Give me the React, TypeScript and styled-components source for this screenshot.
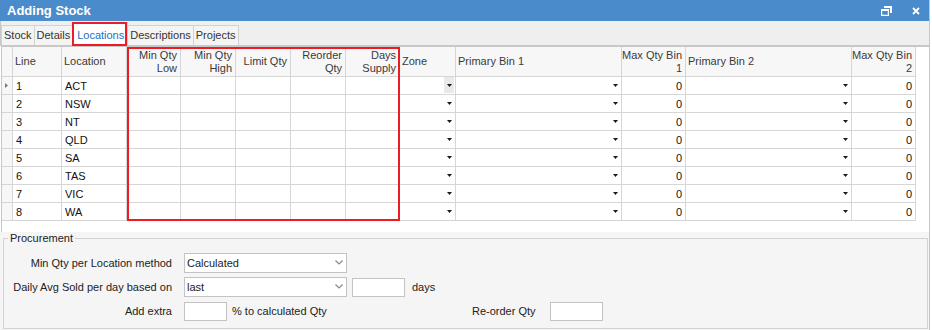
import React from 'react'
import styled, { createGlobalStyle } from 'styled-components'

const GlobalStyle = createGlobalStyle`
  html, body {
    margin: 0;
    padding: 0;
    background: #fff;
  }
  body {
    font-family: 'Liberation Sans', Arial, sans-serif;
    font-size: 11px;
    color: #1e1e1e;
  }
  * {
    box-sizing: border-box;
  }
`

const COLS = [11, 49, 65, 54, 55, 55, 55, 54, 56, 166, 64, 166, 64]
const LINE = '#d6d6d6'
const RED = '#ed1c24'

const Window = styled.div`
  position: relative;
  width: 930px;
  height: 330px;
  display: flex;
  flex-direction: column;
  border-right: 1px solid #c6c6c6;
  background: #fff;
  overflow: hidden;
`

const TitleBar = styled.div`
  flex: none;
  height: 21px;
  display: flex;
  align-items: center;
  padding: 0 9px 0 7px;
  background: #4a8ccb;
  color: #fff;
  font-size: 13px;
  font-weight: 700;
`

const Title = styled.div`
  flex: 1;
`

const TitleButtons = styled.div`
  display: flex;
  align-items: center;
  gap: 20px;
`

const TabStrip = styled.div`
  flex: none;
  height: 25px;
  display: flex;
  align-items: flex-end;
  background: #efefef;
  border-left: 1px solid #c8c8c8;
  border-bottom: 1px solid #c8c8c8;
`

const Tab = styled.div<{ $active?: boolean }>`
  height: ${({ $active }) => ($active ? '23px' : '20px')};
  padding: ${({ $active }) => ($active ? '3px 3px 0 4px' : '0 2px')};
  line-height: 19px;
  white-space: nowrap;
  border: 1px solid #d2d2d2;
  border-left: none;
  border-bottom: none;
  background: ${({ $active }) => ($active ? '#fff' : '#f4f4f4')};
  color: ${({ $active }) => ($active ? '#1d6fc4' : '#333')};
  &:first-child {
    border-left: 1px solid #d2d2d2;
  }
`

const GridArea = styled.div`
  flex: none;
  height: 186px;
  margin-left: 1px;
  border-left: 1px solid #c8c8c8;
  border-top: 1px solid #c8c8c8;
  background: #fff;
`

const Grid = styled.div`
  display: grid;
  grid-template-columns: ${COLS.map((c) => `${c}px`).join(' ')};
  width: ${COLS.reduce((a, b) => a + b, 0)}px;
`

const HeadCell = styled.div<{ $right?: boolean }>`
  height: 30px;
  display: flex;
  align-items: center;
  justify-content: ${({ $right }) => ($right ? 'flex-end' : 'flex-start')};
  text-align: ${({ $right }) => ($right ? 'right' : 'left')};
  padding: ${({ $right }) => ($right ? '0 3px 0 0' : '0 2px')};
  white-space: nowrap;
  line-height: 13px;
  background: #f7f7f7;
  color: #3a3a3a;
  border-right: 1px solid ${LINE};
  border-bottom: 1px solid ${LINE};
`

const Cell = styled.div<{ $right?: boolean; $indicator?: boolean }>`
  position: relative;
  height: 18px;
  display: flex;
  align-items: center;
  justify-content: ${({ $right }) => ($right ? 'flex-end' : 'flex-start')};
  padding: 0 3px;
  background: ${({ $indicator }) => ($indicator ? '#f7f7f7' : '#fff')};
  color: #111;
  border-right: 1px solid ${LINE};
  border-bottom: 1px solid ${LINE};
`

const DropButton = styled.span<{ $focused?: boolean }>`
  position: absolute;
  right: 1px;
  top: 0;
  bottom: 1px;
  width: 10px;
  display: flex;
  align-items: center;
  justify-content: center;
  background: ${({ $focused }) => ($focused ? '#e9e9e9' : 'transparent')};
`

const Procurement = styled.div`
  flex: 1;
  display: flex;
  padding: 0 1px 1px 3px;
  background: #f5f5f5;
`

const GroupBox = styled.fieldset`
  flex: 1;
  min-width: 0;
  margin: 0;
  padding: 8px 0 0;
  border: 1px solid #d2d2d2;
  display: flex;
  flex-direction: column;
  gap: 4px;
`

const Legend = styled.legend`
  margin-left: 4px;
  padding: 0 2px;
  line-height: 13px;
  color: #222;
`

const FormRow = styled.div`
  display: flex;
  align-items: center;
  height: 20px;
`

const Label = styled.div<{ $width?: number; $gap?: number }>`
  width: ${({ $width }) => ($width ? `${$width}px` : 'auto')};
  margin-right: ${({ $gap }) => $gap ?? 12}px;
  text-align: right;
  white-space: nowrap;
  color: #222;
`

const Select = styled.div`
  position: relative;
  width: 163px;
  height: 20px;
  display: flex;
  align-items: center;
  padding-left: 2px;
  background: #fff;
  border: 1px solid #c3c3c3;
  color: #222;
`

const Chevron = styled.svg`
  position: absolute;
  right: 3px;
  top: 6px;
`

const Input = styled.div<{ $width: number; $ml?: number }>`
  width: ${({ $width }) => $width}px;
  height: 19px;
  margin-left: ${({ $ml }) => $ml ?? 0}px;
  background: #fff;
  border: 1px solid #c3c3c3;
`

const Suffix = styled.span<{ $ml: number; $width?: number }>`
  margin-left: ${({ $ml }) => $ml}px;
  width: ${({ $width }) => ($width ? `${$width}px` : 'auto')};
  color: #222;
`

const Highlight = styled.div<{ $x: number; $y: number; $w: number; $h: number }>`
  position: absolute;
  left: ${({ $x }) => $x}px;
  top: ${({ $y }) => $y}px;
  width: ${({ $w }) => $w}px;
  height: ${({ $h }) => $h}px;
  border: 2px solid ${RED};
  pointer-events: none;
`

function Arrow() {
  return (
    <svg width="5" height="3" viewBox="0 0 5 3">
      <polygon points="0,0 5,0 2.5,3" fill="#1a1a1a" />
    </svg>
  )
}

function RowPointer() {
  return (
    <svg width="3" height="5" viewBox="0 0 3 5">
      <polygon points="0,0 3,2.5 0,5" fill="#7a7a7a" />
    </svg>
  )
}

function SelectChevron() {
  return (
    <Chevron width="8" height="5" viewBox="0 0 8 5">
      <polyline points="0.5,0.5 4,4 7.5,0.5" fill="none" stroke="#8a8a8a" strokeWidth="1.2" />
    </Chevron>
  )
}

const headers: { label: React.ReactNode; right?: boolean }[] = [
  { label: '' },
  { label: 'Line' },
  { label: 'Location' },
  { label: <>Min Qty<br />Low</>, right: true },
  { label: <>Min Qty<br />High</>, right: true },
  { label: 'Limit Qty', right: true },
  { label: <>Reorder<br />Qty</>, right: true },
  { label: <>Days<br />Supply</>, right: true },
  { label: 'Zone' },
  { label: 'Primary Bin 1' },
  { label: <>Max Qty Bin<br />1</>, right: true },
  { label: 'Primary Bin 2' },
  { label: <>Max Qty Bin<br />2</>, right: true },
]

const locations = ['ACT', 'NSW', 'NT', 'QLD', 'SA', 'TAS', 'VIC', 'WA']

export default function App() {
  return (
    <>
      <GlobalStyle />
      <Window>
        <TitleBar>
          <Title>Adding Stock</Title>
          <TitleButtons>
            <svg width="11" height="10" viewBox="0 0 11 10">
              <path d="M3 0h8v7H9V2H3z" fill="#fff" />
              <path d="M0 3h8v7H0zM1.2 5v3.8h5.6V5z" fill="#fff" fillRule="evenodd" />
            </svg>
            <svg width="8" height="8" viewBox="0 0 8 8">
              <path d="M1 1l6 6M7 1L1 7" stroke="#fff" strokeWidth="1.8" />
            </svg>
          </TitleButtons>
        </TitleBar>

        <TabStrip>
          <Tab>Stock</Tab>
          <Tab>Details</Tab>
          <Tab $active>Locations</Tab>
          <Tab>Descriptions</Tab>
          <Tab>Projects</Tab>
        </TabStrip>

        <GridArea>
          <Grid>
            {headers.map((h, i) => (
              <HeadCell key={i} $right={h.right}>
                {h.label}
              </HeadCell>
            ))}
            {locations.map((loc, r) => (
              <React.Fragment key={loc}>
                <Cell $indicator>{r === 0 && <RowPointer />}</Cell>
                <Cell>{r + 1}</Cell>
                <Cell>{loc}</Cell>
                <Cell />
                <Cell />
                <Cell />
                <Cell />
                <Cell />
                <Cell>
                  <DropButton $focused={r === 0}>
                    <Arrow />
                  </DropButton>
                </Cell>
                <Cell>
                  <DropButton>
                    <Arrow />
                  </DropButton>
                </Cell>
                <Cell $right>0</Cell>
                <Cell>
                  <DropButton>
                    <Arrow />
                  </DropButton>
                </Cell>
                <Cell $right>0</Cell>
              </React.Fragment>
            ))}
          </Grid>
        </GridArea>

        <Procurement>
          <GroupBox>
            <Legend>Procurement</Legend>
            <FormRow>
              <Label $width={168}>Min Qty per Location method</Label>
              <Select>
                Calculated
                <SelectChevron />
              </Select>
            </FormRow>
            <FormRow>
              <Label $width={168}>Daily Avg Sold per day based on</Label>
              <Select>
                last
                <SelectChevron />
              </Select>
              <Input $width={53} $ml={5} />
              <Suffix $ml={7}>days</Suffix>
            </FormRow>
            <FormRow>
              <Label $width={168}>Add extra</Label>
              <Input $width={43} />
              <Suffix $ml={5} $width={240}>% to calculated Qty</Suffix>
              <Label $gap={14}>Re-order Qty</Label>
              <Input $width={53} />
            </FormRow>
          </GroupBox>
        </Procurement>

        <Highlight $x={72} $y={22} $w={55} $h={24} />
        <Highlight $x={127} $y={47} $w={273} $h={174} />
      </Window>
    </>
  )
}
